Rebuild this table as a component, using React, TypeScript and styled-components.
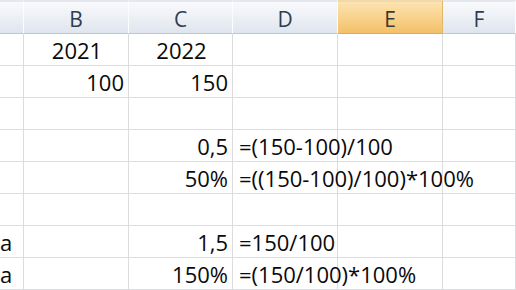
import React from 'react';
import styled, { createGlobalStyle } from 'styled-components';

const GlobalStyle = createGlobalStyle`
    html, body {
        margin: 0;
        padding: 0;
        background: #ffffff;
        overflow: hidden;
    }
`;

const Sheet = styled.div`
    display: grid;
    grid-template-columns: 24px 105px 104px 105px 105px 1fr;
    grid-template-rows: 34px repeat(8, 32px);
    width: 516px;
    height: 290px;
    font-family: "Open Sans", "Liberation Sans", sans-serif;
    color: #0a0a0a;
    overflow: hidden;
`;

const HeaderCell = styled.div<{ $active?: boolean }>`
    display: flex;
    align-items: center;
    justify-content: center;
    padding-top: 3px;
    box-sizing: border-box;
    font-size: 21px;
    color: ${p => (p.$active ? '#3a3a32' : '#2c3e50')};
    background: ${p => (p.$active
        ? 'linear-gradient(#fde3b0, #f9d491 45%, #f3c069)'
        : 'linear-gradient(#f8f9fb, #eef1f6 45%, #dfe5ee)')};
    border-top: 2px solid ${p => (p.$active ? '#f2d9ad' : '#e4e8ee')};
    border-right: 1px solid ${p => (p.$active ? '#e2b868' : '#fbfcfd')};
    border-bottom: 1px solid ${p => (p.$active ? '#e2aa55' : '#bdc8d6')};
`;

const Cell = styled.div<{ $align?: 'left' | 'right' | 'center' }>`
    display: flex;
    align-items: flex-end;
    justify-content: ${p => (p.$align === 'right' ? 'flex-end' : p.$align === 'center' ? 'center' : 'flex-start')};
    box-sizing: border-box;
    padding: 0 4px 2px 6px;
    font-size: 22px;
    line-height: 26px;
    white-space: nowrap;
    border-right: 1px solid #dadcdd;
    border-bottom: 1px solid #dadcdd;
    overflow: visible;
`;

const ClipCell = styled(Cell)`
    overflow: hidden;
    padding-left: 0;
`;

type Row = {
    a?: string;
    b?: string;
    c?: string;
    d?: string;
    heading?: boolean;
};

const rows: Row[] = [
    { b: '2021', c: '2022', heading: true },
    { b: '100', c: '150' },
    {},
    { c: '0,5', d: '=(150-100)/100' },
    { c: '50%', d: '=((150-100)/100)*100%' },
    {},
    { a: 'a', c: '1,5', d: '=150/100' },
    { a: 'a', c: '150%', d: '=(150/100)*100%' },
];

const columns = ['', 'B', 'C', 'D', 'E', 'F'];

const App = () => {
    return (
        <>
            <GlobalStyle />
            <Sheet>
                {columns.map(col => (
                    <HeaderCell key={col || 'corner'} $active={col === 'E'}>{col}</HeaderCell>
                ))}
                {rows.map((row, index) => (
                    <React.Fragment key={index}>
                        <ClipCell>{row.a}</ClipCell>
                        <Cell $align={row.heading ? 'center' : 'right'}>{row.b}</Cell>
                        <Cell $align={row.heading ? 'center' : 'right'}>{row.c}</Cell>
                        <Cell>{row.d}</Cell>
                        <Cell />
                        <Cell />
                    </React.Fragment>
                ))}
            </Sheet>
        </>
    );
};

export default App;
